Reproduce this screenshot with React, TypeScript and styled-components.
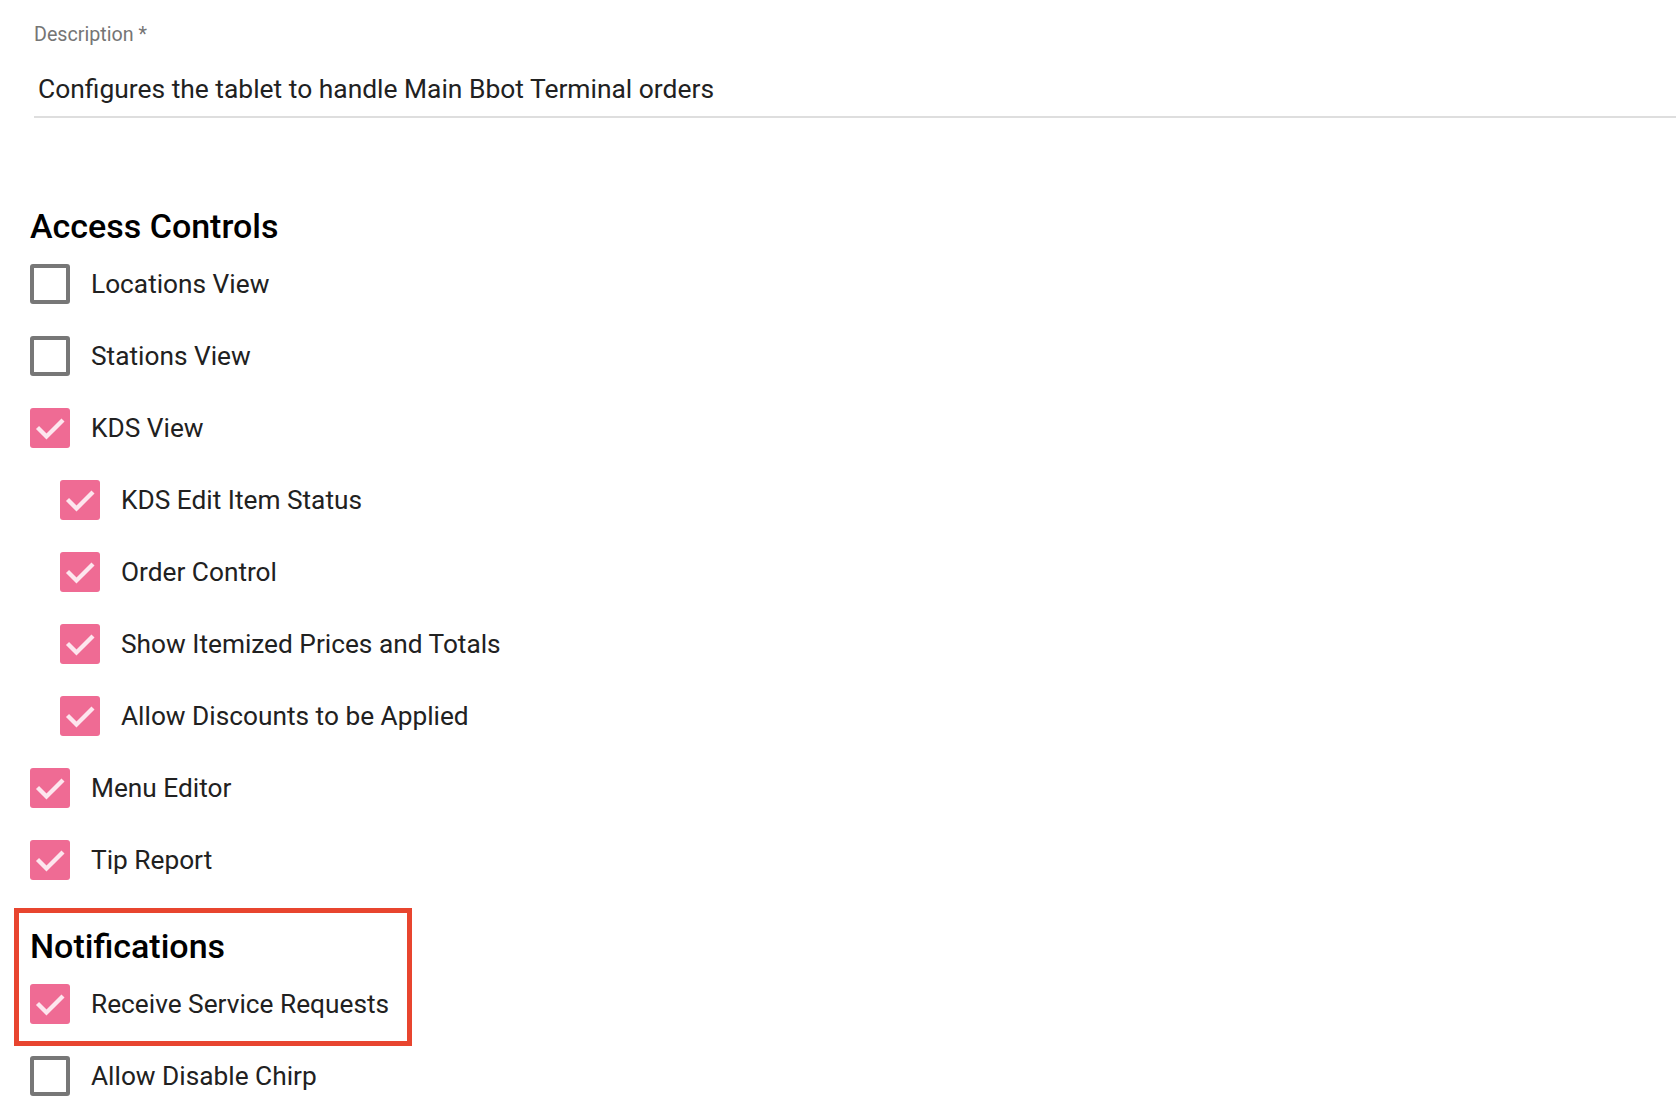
import React from "react";
import styled, { createGlobalStyle } from "styled-components";

const GlobalStyle = createGlobalStyle`
  html, body {
    margin: 0;
    padding: 0;
    background: #ffffff;
  }
  body {
    font-family: Roboto, "Liberation Sans", Arial, sans-serif;
    -webkit-font-smoothing: antialiased;
  }
  * { box-sizing: border-box; }
`;

const Page = styled.div`
  width: 1676px;
  min-height: 1114px;
  padding: 24px 0 0 30px;
  display: flex;
  flex-direction: column;
  overflow: hidden;
`;

const Field = styled.div`
  margin-left: 4px;
  display: flex;
  flex-direction: column;
  border-bottom: 2px solid #dedede;
`;

const FieldLabel = styled.label`
  font-size: 19.7px;
  line-height: 22px;
  color: #757575;
`;

const FieldValue = styled.div`
  padding: 28px 0 11px 4px;
  font-size: 26.4px;
  line-height: 31px;
  color: #212121;
`;

const SectionTitle = styled.h2`
  margin: 0 0 2px 0;
  font-size: 34px;
  line-height: 40px;
  font-weight: 500;
  color: #000;
`;

const AccessSection = styled.section`
  margin-top: 88px;
  display: flex;
  flex-direction: column;
`;

const Row = styled.label<{ $indent: number }>`
  display: flex;
  align-items: center;
  gap: 21px;
  height: 72px;
  padding-left: ${(p) => p.$indent}px;
  font-size: 26.25px;
  color: #212121;
  cursor: pointer;
`;

const Box = styled.span<{ $checked: boolean }>`
  flex: none;
  width: 40px;
  height: 40px;
  border-radius: 3px;
  display: flex;
  align-items: center;
  justify-content: center;
  background: ${(p) => (p.$checked ? "#ef6b94" : "transparent")};
  border: ${(p) => (p.$checked ? "none" : "4px solid #777777")};
`;

const Highlight = styled.section`
  position: relative;
  margin-top: 30px;
  align-self: flex-start;
  display: flex;
  flex-direction: column;
  &::after {
    content: "";
    position: absolute;
    top: -18px;
    left: -16px;
    right: -23px;
    bottom: -6px;
    border: 5px solid #e8452f;
    pointer-events: none;
  }
`;

const Check = () => (
  <svg width="40" height="40" viewBox="0 0 40 40">
    <polyline
      points="7.5,19.5 16.5,28.5 33,12"
      fill="none"
      stroke="#fde6ee"
      strokeWidth="4.3"
      strokeLinecap="butt"
      strokeLinejoin="miter"
    />
  </svg>
);

type Item = { label: string; checked: boolean; nested?: boolean };

const CheckRow = ({ item }: { item: Item }) => (
  <Row $indent={item.nested ? 30 : 0}>
    <Box $checked={item.checked}>{item.checked && <Check />}</Box>
    <span>{item.label}</span>
  </Row>
);

const access: Item[] = [
  { label: "Locations View", checked: false },
  { label: "Stations View", checked: false },
  { label: "KDS View", checked: true },
  { label: "KDS Edit Item Status", checked: true, nested: true },
  { label: "Order Control", checked: true, nested: true },
  { label: "Show Itemized Prices and Totals", checked: true, nested: true },
  { label: "Allow Discounts to be Applied", checked: true, nested: true },
  { label: "Menu Editor", checked: true },
  { label: "Tip Report", checked: true },
];

export default function App() {
  return (
    <>
      <GlobalStyle />
      <Page>
        <Field>
          <FieldLabel>Description *</FieldLabel>
          <FieldValue>Configures the tablet to handle Main Bbot Terminal orders</FieldValue>
        </Field>
        <AccessSection>
          <SectionTitle>Access Controls</SectionTitle>
          {access.map((it) => (
            <CheckRow key={it.label} item={it} />
          ))}
        </AccessSection>
        <Highlight>
          <SectionTitle>Notifications</SectionTitle>
          <CheckRow item={{ label: "Receive Service Requests", checked: true }} />
        </Highlight>
        <CheckRow item={{ label: "Allow Disable Chirp", checked: false }} />
      </Page>
    </>
  );
}
